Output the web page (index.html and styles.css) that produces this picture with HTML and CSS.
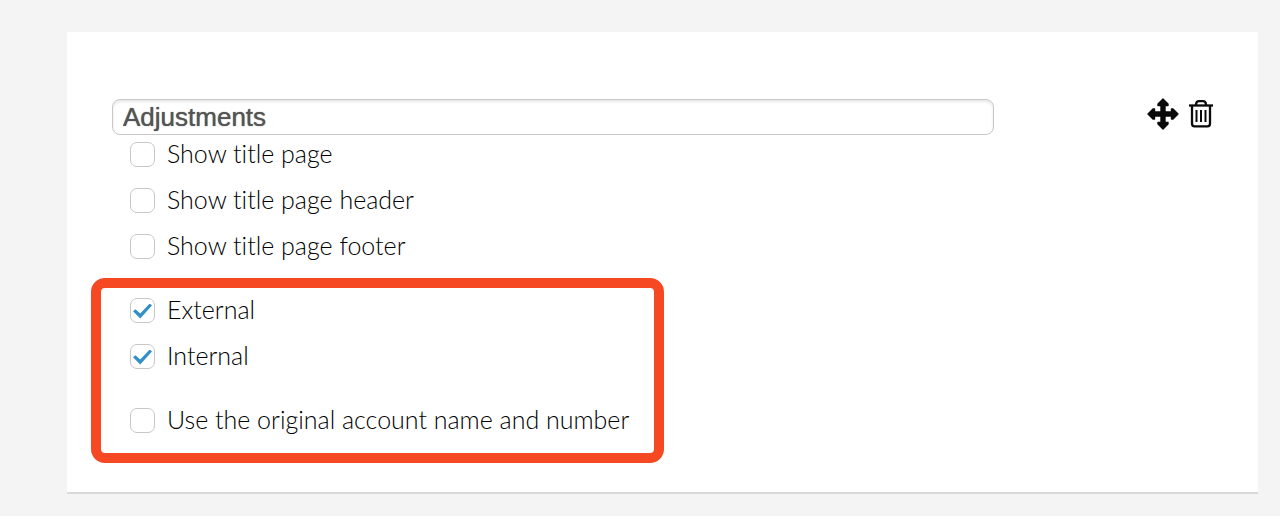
FILE: index.html
```html
<!DOCTYPE html>
<html lang="en">
<head>
    <meta charset="UTF-8">
    <title>Adjustments</title>
    <link rel="stylesheet" href="styles.css">
</head>
<body>
    <div class="panel">
        <div class="head">
            <input type="text" class="name" value="Adjustments" aria-label="Section name">
            <div class="tools">
                <button type="button" aria-label="Move">
                    <svg width="32" height="32" viewBox="0 0 32 32">
                        <path d="M16 1L21 6V7.5H18V14H24.5V11H26L31 16L26 21H24.5V18H18V24.5H21V26L16 31L11 26V24.5H14V18H7.5V21H6L1 16L6 11H7.5V14H14V7.5H11V6Z" fill="#0a0a0a" stroke="#0a0a0a" stroke-width="1.4" stroke-linejoin="round"/>
                    </svg>
                </button>
                <button type="button" aria-label="Delete">
                    <svg width="26" height="32" viewBox="0 0 26 32" fill="none" stroke="#0a0a0a" stroke-width="2.3">
                        <path d="M1 7.5H25"/>
                        <path d="M8 7.5V6.5Q8.3 3.2 11 3.2H15Q17.7 3.2 18 6.5V7.5"/>
                        <path d="M4 8V25.5Q4 28.3 6.5 28.3H19.5Q22 28.3 22 25.5V8"/>
                        <path d="M8.5 12V24M13 12V24M17.5 12V24" stroke-width="2"/>
                    </svg>
                </button>
            </div>
        </div>

        <div class="options">
            <label class="option"><input type="checkbox">Show title page</label>
            <label class="option"><input type="checkbox">Show title page header</label>
            <label class="option"><input type="checkbox">Show title page footer</label>
        </div>

        <div class="options marked">
            <label class="option"><input type="checkbox" checked>External</label>
            <label class="option"><input type="checkbox" checked>Internal</label>
            <label class="option apart"><input type="checkbox">Use the original account name and number</label>
        </div>
    </div>
</body>
</html>
```

FILE: styles.css
```css
*{
    box-sizing: border-box;
}
body{
    margin: 0;
    padding: 32px 22px 22px 67px;
    background: #f4f4f4;
    color: #000000;
    font-family: Lato, "Liberation Sans", sans-serif;
    font-size: 25px;
    font-weight: 300;
    font-variant-ligatures: none;
}
.panel{
    padding: 67px 44px 29px 45px;
    background: #ffffff;
    border-bottom: 2px solid #d9d9d9;
}

.head{
    display: flex;
    justify-content: space-between;
    height: 36px;
}
.name{
    width: 80%;
    padding: 0 10px;
    border: 1px solid #c8c8c8;
    border-radius: 8px;
    background: #ffffff;
    box-shadow: inset 0 2px 3px #e8e8e8;
    color: #555555;
    font-family: "Liberation Sans", sans-serif;
    font-size: 26px;
    text-shadow: 0 0 1px #555555;
}
.tools{
    display: flex;
    align-items: flex-start;
    gap: 9px;
}
.tools button{
    padding: 0;
    border: none;
    background: none;
}
.tools svg{
    display: block;
    margin-top: -1px;
}

.options{
    display: flex;
    flex-direction: column;
    align-items: flex-start;
    gap: 10px;
    padding-left: 18px;
}
.option{
    display: flex;
    align-items: center;
    gap: 12px;
    line-height: 36px;
}
.option input{
    appearance: none;
    display: grid;
    place-items: center;
    width: 25px;
    height: 25px;
    margin: 2px 0 0;
    border: 1px solid #c8c8c8;
    border-radius: 7px;
    background: #ffffff;
}
.option input:checked::before{
    content: "";
    width: 19px;
    height: 15px;
    margin-top: 2px;
    background: #328fc8;
    clip-path: polygon(0 52%, 13% 38%, 38% 67%, 88% 0, 100% 14%, 38% 100%);
}

/* red frame around the account type options */
.marked{
    width: fit-content;
    margin: 15px 0 0 -21px;
    padding: 3px 25px 16px 29px;
    border: 10px solid #f54823;
    border-radius: 14px;
}
.apart{
    margin-top: 18px;
}
```
